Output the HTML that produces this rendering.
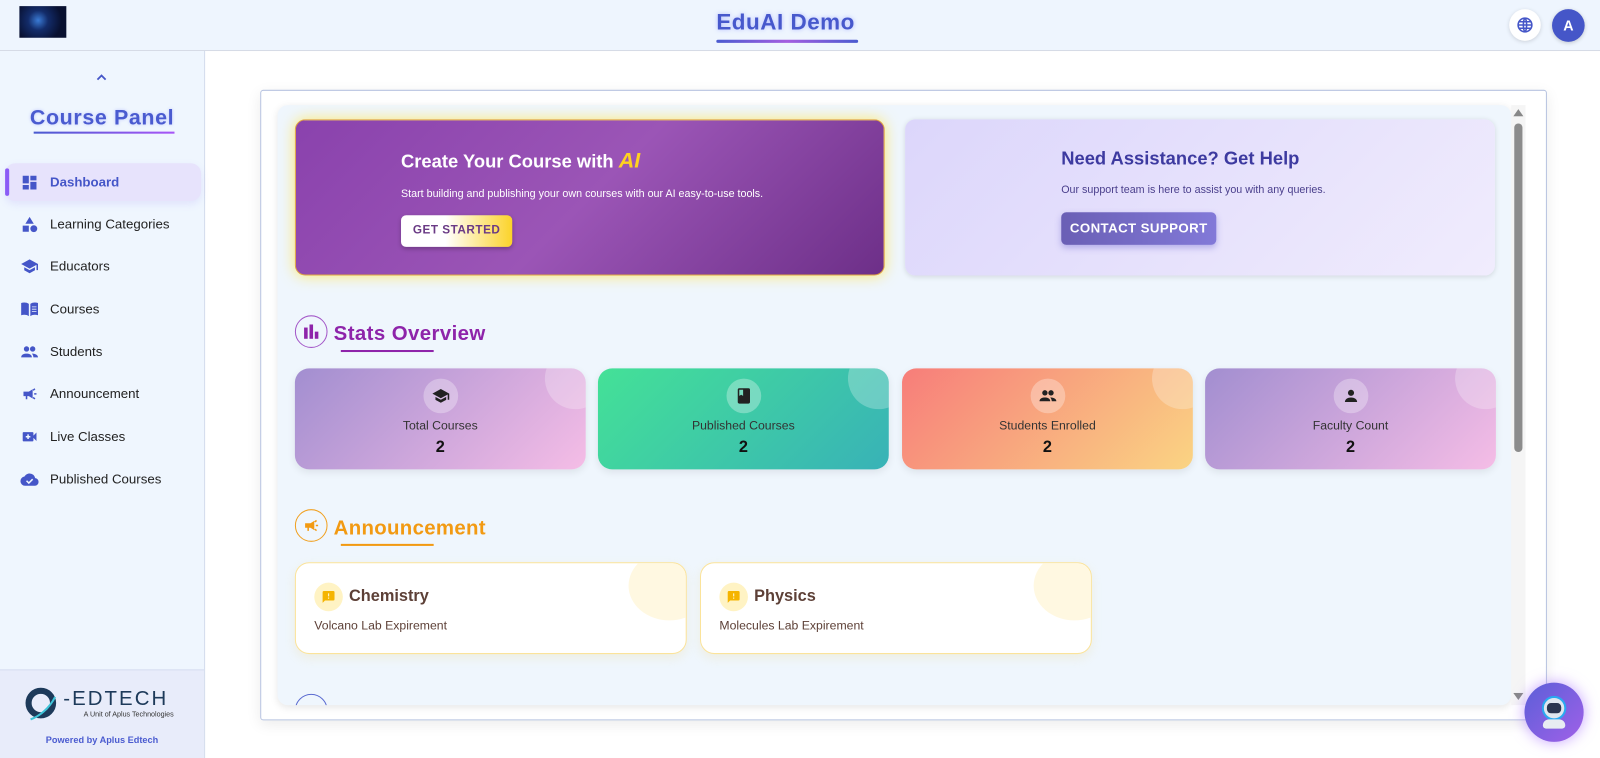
<!DOCTYPE html>
<html><head><meta charset="utf-8"><style>
*{box-sizing:border-box;margin:0;padding:0}
html,body{width:1600px;height:758px;overflow:hidden}
body{font-family:"Liberation Sans",Arial,sans-serif;background:#fff;position:relative}
#w{position:absolute;left:0;top:0;width:1568px;height:743px;transform:scale(1.0204);transform-origin:0 0}
.hdr{position:absolute;left:0;top:0;width:1568px;height:50px;background:#eef5fe;border-bottom:1px solid #d6dbe6}
.side{position:absolute;left:0;top:50px;width:201px;height:693px;background:#eff6fe;border-right:1px solid #d3dcec}
.nav{position:absolute;left:5px;width:192px;height:37px;display:flex;align-items:center;font-size:13px;color:#222}
.nav svg{position:absolute;left:15px;width:18px;height:18px}
.nav span{position:absolute;left:44px}
.foot{position:absolute;left:0;top:656px;width:200px;height:87px;background:#e8ecfa;border-top:1px solid #d6dcf0}
.outer{position:absolute;left:255px;top:88px;width:1261px;height:618px;border:1px solid #b7c3e0;border-radius:3px;box-shadow:0 4px 14px rgba(0,0,0,.08)}
.inner{position:absolute;left:272px;top:103px;width:1209px;height:588px;background:#eff6fd;border-radius:10px;box-shadow:0 2px 8px rgba(0,0,0,.1);overflow:hidden}
.sc{position:absolute;left:1481px;top:103px;width:14px;height:588px;background:#f5f5f5}
.stat{position:absolute;top:258px;width:285px;height:99px;border-radius:14px;overflow:hidden;text-align:center;box-shadow:0 3px 8px rgba(0,0,0,.08)}
.stat .ic{position:absolute;left:50%;top:10px;margin-left:-17px;width:34px;height:34px;border-radius:50%;background:rgba(255,255,255,.3)}
.stat .ic svg{position:absolute;left:8px;top:8px;width:18px;height:18px}
.stat .bub{position:absolute;right:-20px;top:-20px;width:60px;height:60px;border-radius:50%;background:rgba(255,255,255,.25)}
.stat .l{position:absolute;top:49px;width:100%;font-size:12px;color:#333}
.stat .n{position:absolute;top:69px;width:100%;font-size:16px;font-weight:bold;color:#111}
.ann{position:absolute;top:448px;width:384px;height:90px;background:#fff;border:1px solid #fbe39a;border-radius:14px;overflow:hidden;box-shadow:0 4px 10px rgba(240,200,80,.15)}
.ann .bub{position:absolute;right:-24px;top:-12px;width:80px;height:68px;border-radius:50%;background:#fff8e1}
.ann .ic{position:absolute;left:18px;top:19px;width:28px;height:28px;border-radius:50%;background:#fff3c4}
.ann .t{position:absolute;left:52px;top:24px;font-size:16px;font-weight:bold;color:#5d4037}
.ann .d{position:absolute;left:18px;top:54px;font-size:12px;color:#5d4037}
</style></head><body><div id="w">
<div class="hdr">
 <div style="position:absolute;left:19px;top:6px;width:46px;height:31px;background:radial-gradient(circle at 40% 45%,#3a7bd5 0,#132c6a 30%,#081030 70%)"></div>
 <div style="position:absolute;left:702px;top:9px;font-size:22px;font-weight:bold;color:#4758cc;text-shadow:0 0 4px rgba(120,130,255,.5);letter-spacing:.5px">EduAI Demo</div>
 <div style="position:absolute;left:702px;top:39px;width:139px;height:3px;background:linear-gradient(90deg,#4a5bd0,#a45ee0,#4a5bd0);border-radius:2px"></div>
 <div style="position:absolute;left:1479px;top:9px;width:31px;height:31px;border-radius:50%;background:#fff;box-shadow:0 1px 4px rgba(0,0,0,.15)"><svg style="position:absolute;left:7px;top:7px" width="17" height="17" viewBox="0 0 24 24" fill="none" stroke="#4556c8" stroke-width="2.2"><circle cx="12" cy="12" r="9.5"/><path d="M2.5 12h19M12 2.5c3 3 3 16 0 19M12 2.5c-3 3-3 16 0 19M4 7.5h16M4 16.5h16"/></svg></div>
 <div style="position:absolute;left:1521px;top:9px;width:32px;height:32px;border-radius:50%;background:#4556c8;color:#fff;font-size:14px;font-weight:bold;text-align:center;line-height:32px;box-shadow:0 1px 4px rgba(0,0,0,.2)">A</div>
</div>
<div class="side">
 <svg style="position:absolute;left:94px;top:22px" width="11" height="8" viewBox="0 0 11 8"><path d="M1.5 6L5.5 2L9.5 6" stroke="#4556c8" stroke-width="1.8" fill="none"/></svg>
 <div style="position:absolute;left:0;top:54px;width:200px;text-align:center;font-size:21px;font-weight:bold;color:#4a5bd0;letter-spacing:.6px;text-shadow:0 0 3px rgba(120,130,255,.4)">Course Panel</div>
 <div style="position:absolute;left:33px;top:79px;width:138px;height:2px;background:linear-gradient(90deg,#4a5bd0,#a855f7)"></div>
 <div class="nav" style="top:110px;background:#e7e3fc;border-radius:10px;box-shadow:0 3px 8px rgba(140,120,240,.15);color:#4556c8;font-weight:bold"><div style="position:absolute;left:0;top:5px;width:4px;height:27px;border-radius:2px;background:#8b5cf6"></div><svg viewBox="0 0 24 24" fill="#4556c8" style="left:15px"><path d="M3 13h8V3H3zm0 8h8v-6H3zm10 0h8V11h-8zm0-18v6h8V3z"/></svg><span>Dashboard</span></div>
 <div class="nav" style="top:151px"><svg viewBox="0 0 24 24" fill="#4556c8"><path d="M12 2l-5.5 9h11z"/><circle cx="17.5" cy="17.5" r="4.5"/><path d="M3 13.5h8v8H3z"/></svg><span>Learning Categories</span></div>
 <div class="nav" style="top:192px"><svg viewBox="0 0 24 24" fill="#4556c8"><path d="M5 13.18v4L12 21l7-3.82v-4L12 17zM12 3L1 9l11 6 9-4.91V17h2V9z"/></svg><span>Educators</span></div>
 <div class="nav" style="top:234px"><svg viewBox="0 0 24 24" fill="#4556c8"><path d="M1 4c3-1 7-1 10 1v16c-3-2-7-2-10-1zM13 5c3-2 7-2 10-1v16c-3-1-7-1-10 1z"/><path d="M15 9h6M15 12h6M15 15h6" stroke="#eff6fe" stroke-width="1"/></svg><span>Courses</span></div>
 <div class="nav" style="top:276px"><svg viewBox="0 0 24 24" fill="#4556c8"><circle cx="8" cy="8" r="3.5"/><circle cx="16" cy="8" r="3.5"/><path d="M1 19c0-4 4-5 7-5s7 1 7 5zM15 14c3 0 8 1 8 5h-6c0-2-1-4-2-5z"/></svg><span>Students</span></div>
 <div class="nav" style="top:317px"><svg viewBox="0 0 24 24" fill="#4556c8"><path d="M18 11h3v2h-3zM16 17.6l1.2-1.6 2.4 1.8-1.2 1.6zM19.6 6.2L18.4 4.6 16 6.4l1.2 1.6zM4 9h7l5-3v12l-5-3H9v4H7v-4H4z"/></svg><span>Announcement</span></div>
 <div class="nav" style="top:359px"><svg viewBox="0 0 24 24" fill="#4556c8"><path d="M17 10.5V7a1 1 0 00-1-1H4a1 1 0 00-1 1v10a1 1 0 001 1h12a1 1 0 001-1v-3.5l4 4v-11z"/><path d="M10 9v6M7 12h6" stroke="#eff6fe" stroke-width="2"/></svg><span>Live Classes</span></div>
 <div class="nav" style="top:401px"><svg viewBox="0 0 24 24" fill="#4556c8"><path d="M19.35 10.04A7.49 7.49 0 0012 4C9.11 4 6.6 5.64 5.35 8.04A6 6 0 006 20h13a5 5 0 00.35-9.96z"/><path d="M8 13.5l3 3 5-5" stroke="#eff6fe" stroke-width="2" fill="none"/></svg><span>Published Courses</span></div>
</div>
<div class="foot">
 <svg style="position:absolute;left:22px;top:12px" width="40" height="40" viewBox="0 0 40 40"><circle cx="18" cy="20" r="12" fill="none" stroke="#1d3a5a" stroke-width="6"/><path d="M8 36c8-3 18-10 24-22" stroke="#3ec4d8" stroke-width="2" fill="none"/></svg>
 <div style="position:absolute;left:62px;top:17px;font-size:20px;color:#1d3a5a;letter-spacing:2px">-EDTECH</div>
 <div style="position:absolute;left:82px;top:40px;font-size:7px;color:#333">A Unit of Aplus Technologies</div>
 <div style="position:absolute;left:0;top:63px;width:200px;text-align:center;font-size:9px;font-weight:bold;color:#4a5bd0">Powered by Aplus Edtech</div>
</div>
<div class="outer"></div>
<div class="inner">
 <div style="position:absolute;left:17px;top:14px;width:578px;height:153px;border-radius:10px;background:linear-gradient(135deg,#8a42ad 0%,#9b55b6 50%,#6d2f88 100%);border:1px solid #e0a440;box-shadow:0 0 14px rgba(255,230,80,.8)">
  <div style="position:absolute;left:103px;top:28px;font-size:18px;font-weight:bold;color:#fff">Create Your Course with <i style="color:#ffd21f;font-size:21px">AI</i></div>
  <div style="position:absolute;left:103px;top:66px;font-size:10.5px;color:#fff">Start building and publishing your own courses with our AI easy-to-use tools.</div>
  <div style="position:absolute;left:103px;top:93px;width:109px;height:31px;border-radius:5px;background:linear-gradient(90deg,#fff 40%,#fbd32a);box-shadow:0 2px 4px rgba(0,0,0,.25);font-size:11.5px;font-weight:bold;color:#6a3a85;text-align:center;line-height:31px;letter-spacing:.5px">GET STARTED</div>
 </div>
 <div style="position:absolute;left:615px;top:14px;width:578px;height:153px;border-radius:10px;background:linear-gradient(135deg,#dcd6fb,#f0ecfd);box-shadow:0 1px 5px rgba(0,0,0,.12)">
  <div style="position:absolute;left:153px;top:28px;font-size:18px;font-weight:bold;color:#3d3aa0">Need Assistance? Get Help</div>
  <div style="position:absolute;left:153px;top:63px;font-size:10.5px;color:#4a3f8c">Our support team is here to assist you with any queries.</div>
  <div style="position:absolute;left:153px;top:91px;width:152px;height:32px;border-radius:5px;background:linear-gradient(90deg,#6a5fb5,#8279d8);box-shadow:0 3px 6px rgba(90,80,200,.35);font-size:13px;font-weight:bold;color:#fff;text-align:center;line-height:32px;letter-spacing:.4px">CONTACT SUPPORT</div>
 </div>
 <div style="position:absolute;left:17px;top:206px;width:32px;height:32px;border-radius:50%;border:1.5px solid #a357c8"><svg style="position:absolute;left:7px;top:7px" width="16" height="16" viewBox="0 0 16 16" fill="#8e24aa"><rect x="1" y="4" width="3.5" height="11"/><rect x="6.3" y="1" width="3.5" height="14"/><rect x="11.5" y="8" width="3.5" height="7"/></svg></div>
 <div style="position:absolute;left:55px;top:213px;font-size:20px;font-weight:bold;color:#8e24aa;letter-spacing:.4px">Stats Overview</div>
 <div style="position:absolute;left:62px;top:240px;width:91px;height:2px;background:#8e24aa"></div>
 <div class="stat" style="left:17px;background:linear-gradient(135deg,#a28ed0,#f5bde6)"><div class="bub"></div><div class="ic"><svg viewBox="0 0 24 24" fill="#222"><path d="M5 13.18v4L12 21l7-3.82v-4L12 17zM12 3L1 9l11 6 9-4.91V17h2V9z"/></svg></div><div class="l">Total Courses</div><div class="n">2</div></div>
 <div class="stat" style="left:314px;background:linear-gradient(135deg,#44e197,#38b2b7)"><div class="bub"></div><div class="ic"><svg viewBox="0 0 24 24" fill="#222"><path d="M18 2H6a2 2 0 00-2 2v16a2 2 0 002 2h12a2 2 0 002-2V4a2 2 0 00-2-2zM6 4h5v8l-2.5-1.5L6 12z"/></svg></div><div class="l">Published Courses</div><div class="n">2</div></div>
 <div class="stat" style="left:612px;background:linear-gradient(135deg,#f77d7a,#fad483)"><div class="bub"></div><div class="ic"><svg viewBox="0 0 24 24" fill="#222"><circle cx="8" cy="8" r="3.5"/><circle cx="16" cy="8" r="3.5"/><path d="M1 19c0-4 4-5 7-5s7 1 7 5zM15 14c3 0 8 1 8 5h-6c0-2-1-4-2-5z"/></svg></div><div class="l">Students Enrolled</div><div class="n">2</div></div>
 <div class="stat" style="left:909px;background:linear-gradient(135deg,#a28ed0,#f5bde6)"><div class="bub"></div><div class="ic"><svg viewBox="0 0 24 24" fill="#222"><circle cx="12" cy="8" r="4"/><path d="M4 20c0-4 4-6 8-6s8 2 8 6z"/></svg></div><div class="l">Faculty Count</div><div class="n">2</div></div>
 <div style="position:absolute;left:17px;top:396px;width:32px;height:32px;border-radius:50%;border:1.5px solid #f0a020"><svg style="position:absolute;left:6px;top:6px" width="18" height="18" viewBox="0 0 24 24" fill="#f29a12"><path d="M18 11h3v2h-3zM16 17.6l1.2-1.6 2.4 1.8-1.2 1.6zM19.6 6.2L18.4 4.6 16 6.4l1.2 1.6zM4 9h7l5-3v12l-5-3H9v4H7v-4H4z"/></svg></div>
 <div style="position:absolute;left:55px;top:404px;font-size:20px;font-weight:bold;color:#f29a12;letter-spacing:.3px">Announcement</div>
 <div style="position:absolute;left:62px;top:430px;width:91px;height:2px;background:#f29a12"></div>
 <div class="ann" style="left:17px"><div class="bub"></div><div class="ic"><svg style="position:absolute;left:7px;top:7px" width="14" height="14" viewBox="0 0 24 24" fill="#f5b400"><path d="M20 2H4a2 2 0 00-2 2v18l4-4h14a2 2 0 002-2V4a2 2 0 00-2-2z"/><path d="M12 6v5M12 13v2" stroke="#fff3c4" stroke-width="2"/></svg></div><div class="t">Chemistry</div><div class="d">Volcano Lab Expirement</div></div>
 <div class="ann" style="left:414px"><div class="bub"></div><div class="ic"><svg style="position:absolute;left:7px;top:7px" width="14" height="14" viewBox="0 0 24 24" fill="#f5b400"><path d="M20 2H4a2 2 0 00-2 2v18l4-4h14a2 2 0 002-2V4a2 2 0 00-2-2z"/><path d="M12 6v5M12 13v2" stroke="#fff3c4" stroke-width="2"/></svg></div><div class="t">Physics</div><div class="d">Molecules Lab Expirement</div></div>
 <div style="position:absolute;left:17px;top:577px;width:32px;height:32px;border-radius:50%;border:1.5px solid #5a6ad0"></div>
</div>
<div class="sc"><svg style="position:absolute;left:2px;top:3px" width="10" height="8"><path d="M0 8L5 1L10 8z" fill="#888"/></svg><div style="position:absolute;left:3px;top:18px;width:8px;height:322px;border-radius:4px;background:#8c8c8c"></div><svg style="position:absolute;left:2px;top:576px" width="10" height="8"><path d="M0 0L5 7L10 0z" fill="#888"/></svg></div>
<div style="position:absolute;left:1494px;top:669px;width:58px;height:58px;border-radius:50%;background:linear-gradient(135deg,#5b5fd8,#a060e8);box-shadow:0 0 14px rgba(160,100,255,.6)">
 <div style="position:absolute;left:17px;top:13px;width:24px;height:24px;border-radius:50%;border:2px solid #2aa8f0;background:#dfe6ef"></div>
 <div style="position:absolute;left:22px;top:20px;width:14px;height:10px;border-radius:4px;background:#2a3550"></div>
 <div style="position:absolute;left:18px;top:36px;width:22px;height:9px;border-radius:6px 6px 3px 3px;background:#e8ecf2"></div>
</div>
</div></body></html>
